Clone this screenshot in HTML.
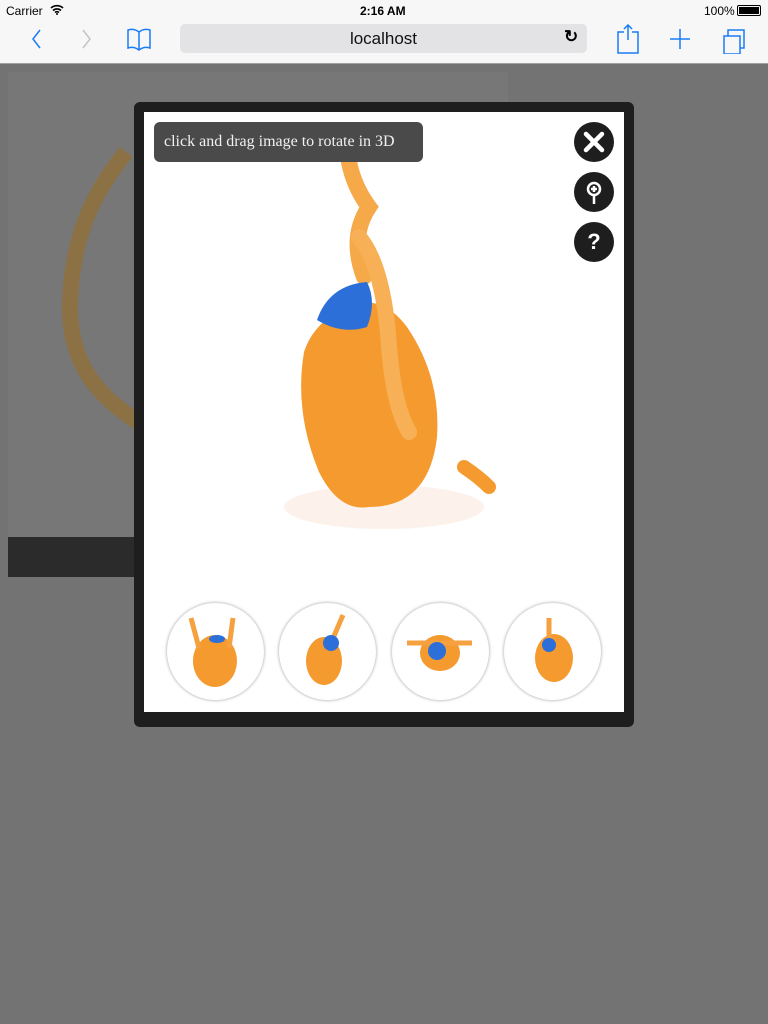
<!DOCTYPE html>
<html><head><meta charset="utf-8"><style>
*{margin:0;padding:0;box-sizing:border-box}
body{width:768px;height:1024px;overflow:hidden;background:#737373;font-family:"Liberation Sans",sans-serif;position:relative}
.bar{position:absolute;left:0;top:0;width:768px;height:64px;background:#f7f7f7;border-bottom:1px solid #a0a0a0}
.abs{position:absolute}
.url{left:180px;top:24px;width:407px;height:29px;background:#e3e3e5;border-radius:5px;text-align:center;font-size:17px;line-height:29px;color:#111}
.under{left:8px;top:72px;width:500px;height:465px;background:#777}
.underbar{left:8px;top:537px;width:500px;height:40px;background:#2b2b2b}
.modal{left:134px;top:102px;width:500px;height:625px;background:#1e1e1e;border-radius:6px}
.inner{left:144px;top:112px;width:480px;height:600px;background:#fff}
.tip{left:154px;top:122px;width:269px;height:40px;background:#4a4a4a;border-radius:6px;color:#f0f0f0;font-family:"Liberation Serif",serif;font-size:16px;line-height:40px;padding-left:10px}
.btn{width:40px;height:40px;border-radius:50%;background:#1e1e1e;left:574px}
.th{width:97px;height:97px;border-radius:50%;background:#fff;box-shadow:0 0 3px #999;top:603px}
</style></head><body>
<div class="bar">
<div class="abs" style="left:6px;top:4px;font-size:12px">Carrier</div>
<svg class="abs" style="left:50px;top:4px" width="14" height="11" viewBox="0 0 14 11"><path d="M1 4a9 9 0 0 1 12 0M3 6.5a6 6 0 0 1 8 0M5 8.5a3 3 0 0 1 4 0" stroke="#000" stroke-width="1.6" fill="none"/><circle cx="7" cy="10" r="1" fill="#000"/></svg>
<div class="abs" style="left:360px;top:4px;font-size:12px;font-weight:bold">2:16 AM</div>
<div class="abs" style="left:704px;top:4px;font-size:12px">100%</div>
<div class="abs" style="left:737px;top:5px;width:24px;height:11px;border:1px solid #000;border-radius:2px;padding:1px"><div style="background:#000;width:100%;height:100%"></div></div>
<svg class="abs" style="left:0;top:24px" width="768" height="30"><g stroke="#1a7cf5" stroke-width="1.5" fill="none"><path d="M40 6l-7 9 7 9"/><path d="M128 6q6-2 11 2q5-4 11-2v18q-6-2-11 2q-5-4-11-2z M139 8v18"/><path d="M624 8h-6v21h20v-21h-6M628 16v-15M624 5l4-4 4 4"/><path d="M680 5v20M670 15h20"/><path d="M724 12h16v18h-16z M728 12v-6h16v18h-4"/></g><path d="M83 6l7 9-7 9" stroke="#c4c4c4" stroke-width="1.5" fill="none"/></svg>
<div class="abs url">localhost</div>
<div class="abs" style="left:564px;top:27px;font-size:17px;font-weight:bold">↻</div>
</div>
<div class="abs under"><svg width="500" height="465"><path d="M118 80 C95 110 65 150 62 230 C60 300 100 330 130 350" stroke="#8c7145" stroke-width="16" fill="none"/></svg></div>
<div class="abs underbar"></div>
<div class="abs modal"></div>
<div class="abs inner"><svg width="480" height="600">
<ellipse cx="240" cy="395" rx="100" ry="22" fill="#fdf1ec"/>
<path d="M205 50 q5 25 20 45 q-20 30 -5 70" stroke="#f5a948" stroke-width="16" fill="none" stroke-linecap="round"/>
<path d="M160 240 q-10 60 15 120 q20 40 50 35 q60 0 68 -70 q4 -60 -30 -110 q-30 -40 -70 -15 q-25 15 -33 40z" fill="#f59a2e"/>
<path d="M215 125 q25 30 30 110 q5 60 20 85" stroke="#f7b055" stroke-width="16" fill="none" stroke-linecap="round"/>
<path d="M320 355 q15 10 25 20" stroke="#f59a2e" stroke-width="14" fill="none" stroke-linecap="round"/>
<path d="M173 208 q12-35 50-38 q10 20 0 45 q-25 8 -50 -7z" fill="#2d6fd8"/>
</svg></div>
<div class="abs tip">click and drag image to rotate in 3D</div>
<div class="abs btn" style="top:122px"><svg width="40" height="40"><path d="M12 12l16 16M28 12l-16 16" stroke="#fff" stroke-width="4.5" stroke-linecap="round"/></svg></div>
<div class="abs btn" style="top:172px"><svg width="40" height="40"><circle cx="20" cy="17" r="6" stroke="#fff" stroke-width="2.5" fill="none"/><path d="M20 23v9M20 14v6M17 17h6" stroke="#fff" stroke-width="2.5"/></svg></div>
<div class="abs btn" style="top:222px;color:#fff;font-weight:bold;font-size:22px;text-align:center;line-height:40px">?</div>
<div class="abs th" style="left:167px"><svg width="97" height="97"><ellipse cx="48" cy="58" rx="22" ry="26" fill="#f59a2e"/><path d="M32 45 l-8-30 M62 45 l4-30" stroke="#f5a140" stroke-width="5" fill="none"/><ellipse cx="50" cy="36" rx="8" ry="4" fill="#2d6fd8"/></svg></div>
<div class="abs th" style="left:279px"><svg width="97" height="97"><ellipse cx="45" cy="58" rx="18" ry="24" fill="#f59a2e"/><path d="M52 40 l12-28" stroke="#f5a140" stroke-width="5"/><circle cx="52" cy="40" r="8" fill="#2d6fd8"/></svg></div>
<div class="abs th" style="left:392px"><svg width="97" height="97"><ellipse cx="48" cy="50" rx="20" ry="18" fill="#f59a2e"/><path d="M15 40 h65" stroke="#f5a140" stroke-width="5"/><circle cx="45" cy="48" r="9" fill="#2d6fd8"/></svg></div>
<div class="abs th" style="left:504px"><svg width="97" height="97"><ellipse cx="50" cy="55" rx="19" ry="24" fill="#f59a2e"/><path d="M45 40 v-25" stroke="#f5a140" stroke-width="5"/><circle cx="45" cy="42" r="7" fill="#2d6fd8"/></svg></div>
</body></html>
